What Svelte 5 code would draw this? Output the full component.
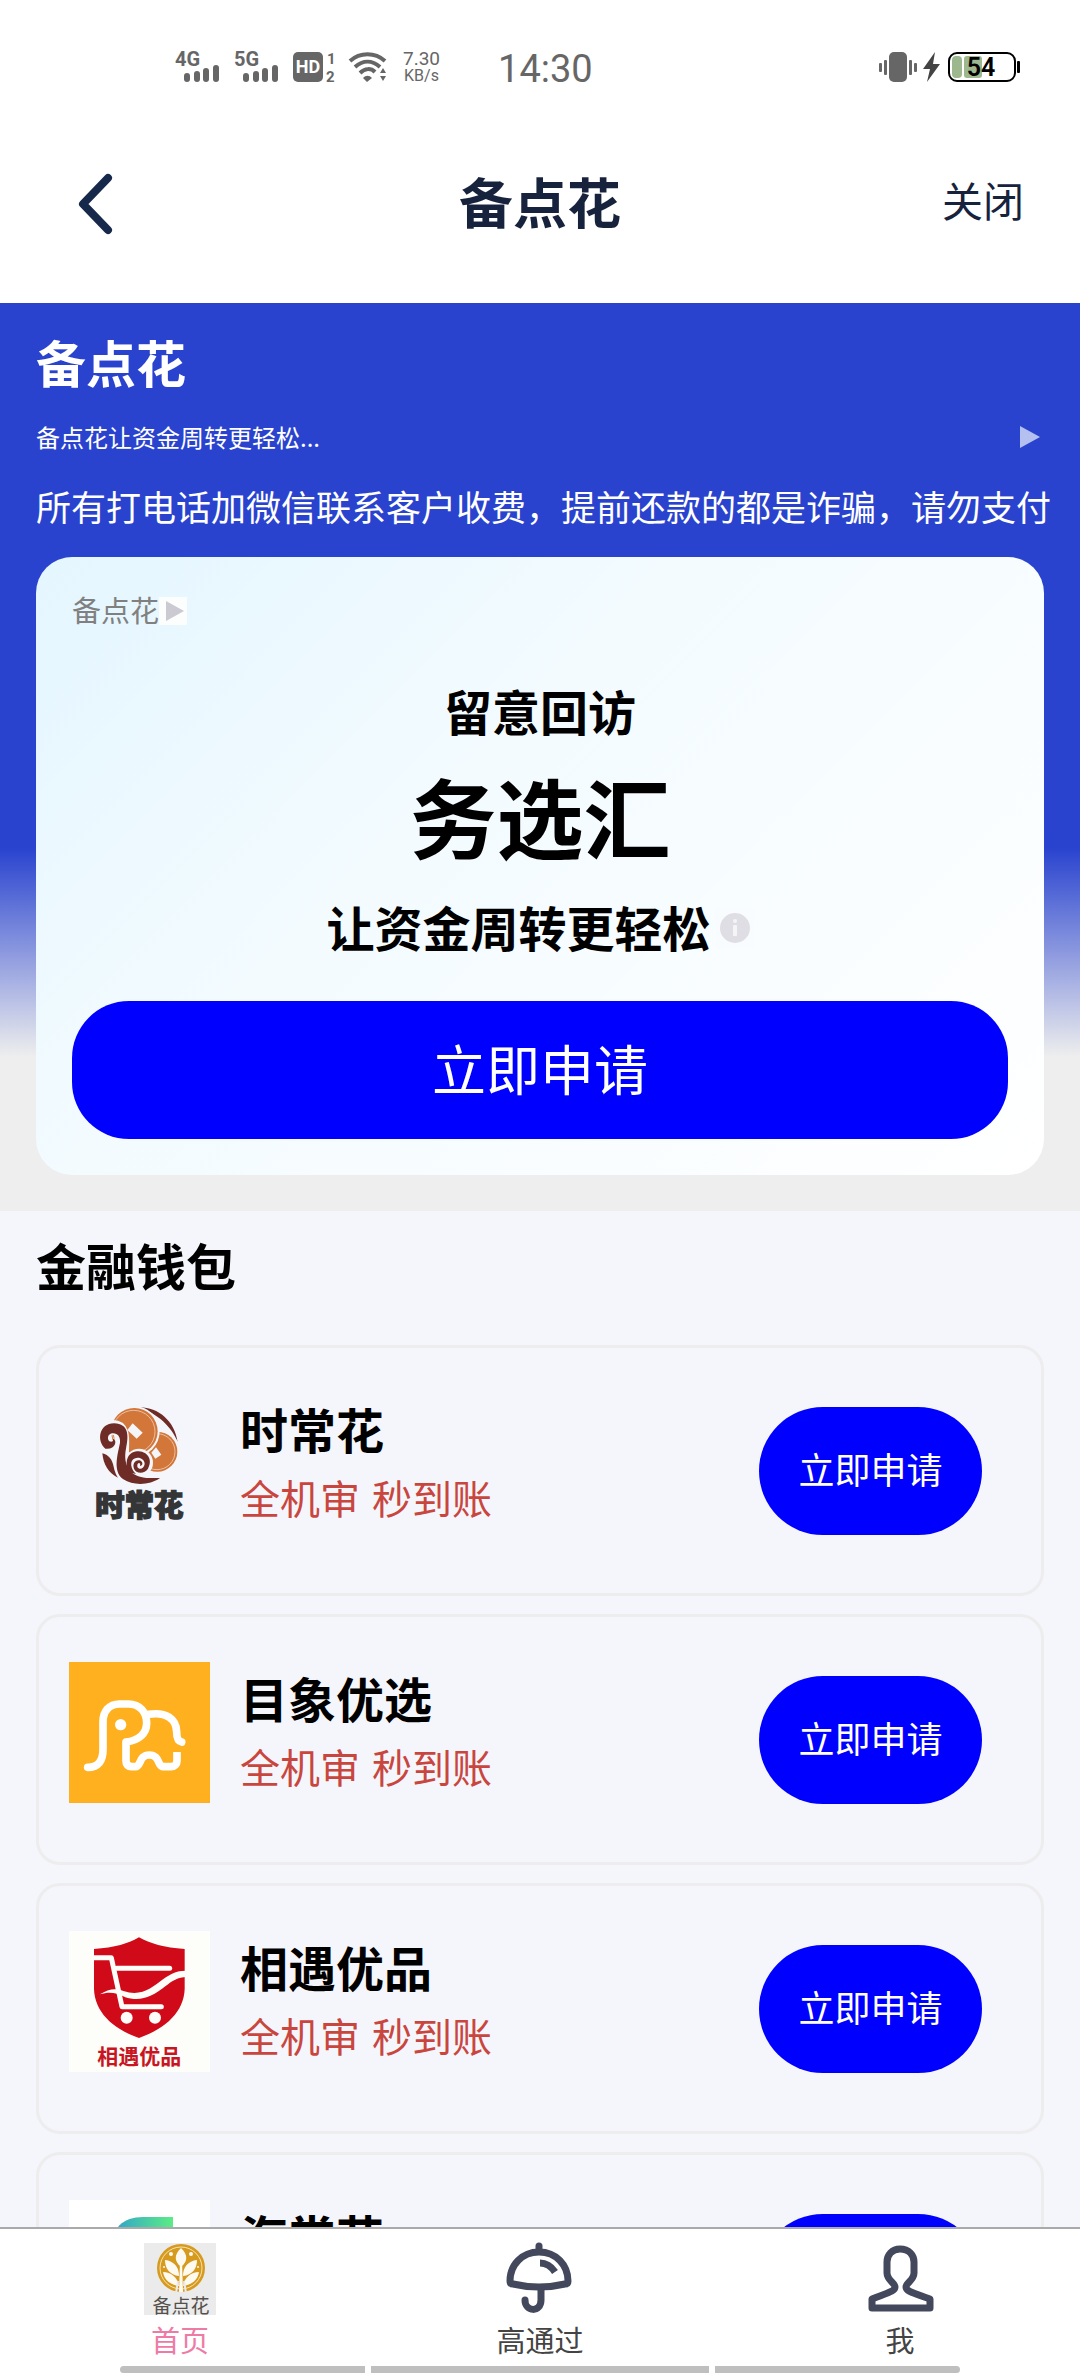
<script>
	/**
	 * @component LoanHome
	 * @description
	 * Home screen of the loan app: status bar, page header, the highlighted
	 * offer, the list of wallets and the bottom tabs.
	 */

	const slogan = '让资金周转更轻松';
	const notice = '所有打电话加微信联系客户收费，提前还款的都是诈骗，请勿支付';

	const wallets = [
		{ id: 'shichang', name: '时常花', tags: ['全机审', '秒到账'] },
		{ id: 'muxiang', name: '目象优选', tags: ['全机审', '秒到账'] },
		{ id: 'xiangyu', name: '相遇优品', tags: ['全机审', '秒到账'] },
		{ id: 'haichang', name: '海常花', tags: ['全机审', '秒到账'] }
	];

	const tabs = [
		{ id: 'home', label: '首页' },
		{ id: 'pass', label: '高通过' },
		{ id: 'me', label: '我' }
	];

	let activeTab = $state('home');
</script>

{#snippet signal(label)}
	<svg width="47" height="32" viewBox="0 0 47 32" role="img" aria-label={label}>
		<text x="0" y="15" font-size="20" font-weight="700">{label}</text>
		<rect x="9" y="22" width="6" height="9" rx="3" />
		<rect x="19" y="20" width="6" height="11" rx="3" />
		<rect x="28" y="17" width="6" height="14" rx="3" />
		<rect x="38" y="14" width="6" height="17" rx="3" />
	</svg>
{/snippet}

{#snippet walletLogo(id)}
	{#if id === 'shichang'}
		<svg class="logo" viewBox="87 159 423 423" aria-hidden="true">
			<path d="M292 202C350 198 404 240 413 306C396 262 352 218 292 202Z" fill="#6f2b25" />
			<circle cx="355" cy="335" r="65" fill="#f5f6fa" />
			<circle cx="352" cy="335" r="60" fill="#d2763a" />
			<circle cx="351" cy="335" r="54" fill="none" stroke="#f5e4d8" stroke-width="2" />
			<circle cx="283" cy="274" r="76" fill="#f5f6fa" />
			<circle cx="283" cy="274" r="70" fill="#d2763a" />
			<circle cx="281" cy="275" r="64" fill="none" stroke="#f5e4d8" stroke-width="2" />
			<path d="M278 250L308 278L290 296L262 270Z" fill="#f5f6fa" />
			<path d="M348 322L364 344L346 356L334 338Z" fill="#f5f6fa" />
			<path d="M205 322C182 300 190 262 218 262C260 262 240 320 246 360C252 402 292 420 350 418" fill="none" stroke="#f5f6fa" stroke-width="44" stroke-linecap="round" />
			<circle cx="297" cy="368" r="42" fill="#f5f6fa" />
			<path d="M187 340C207 345 217 360 221 380C224 396 229 405 234 413C206 400 190 374 187 340Z" fill="#6f2b25" />
			<path d="M196 326C168 302 178 250 222 250C268 251 266 290 258 326C250 364 262 400 300 410C322 416 342 414 360 414C330 436 280 438 250 418C216 394 234 340 240 308C242 290 232 278 216 280C204 282 200 296 208 304C216 308 222 302 218 296C234 300 226 330 196 326Z" fill="#6f2b25" />
			<path d="M264 396C252 356 268 334 296 334C326 336 338 362 324 386C314 402 288 402 282 386C276 370 288 356 302 362C310 368 308 376 300 378C304 366 290 366 292 380C296 390 312 388 314 372C314 354 288 346 276 362C270 374 276 390 288 402Z" fill="#6f2b25" />
			<text x="298" y="528" text-anchor="middle" font-size="88" font-weight="900" fill="#333537" stroke="#333537" stroke-width="4">时常花</text>
		</svg>
	{:else if id === 'muxiang'}
		<svg class="logo" viewBox="87 155 423 423" aria-hidden="true">
			<rect x="87" y="155" width="423" height="423" fill="#ffb01e" />
			<g fill="none" stroke="#fff" stroke-width="23" stroke-linecap="round" stroke-linejoin="round">
				<path d="M143 471C176 471 189 450 189 418V334C189 302 208 281 238 281H265C300 281 320 306 320 338C320 370 296 391 258 395V452C258 463 264 469 275 469H286C304 469 296 434 328 434C360 434 352 469 370 469H393C404 469 411 462 411 451V428" />
				<path d="M326 312C378 304 410 326 410 365C410 382 414 393 425 395" />
			</g>
			<path d="M396 408L410 414L426 410V425H396Z" fill="#ffb01e" />
			<circle cx="242" cy="343" r="17" fill="#fff" />
		</svg>
	{:else if id === 'xiangyu'}
		<svg class="logo" viewBox="87 152 423 423" aria-hidden="true">
			<rect x="87" y="152" width="423" height="423" fill="#fdfdfa" />
			<path d="M297 171C330 190 372 202 434 206V326C432 392 380 444 297 473C214 444 164 392 162 326V206C224 202 266 190 297 171Z" fill="#d00a18" />
			<g fill="none" stroke="#fdfdfa" stroke-linecap="round" stroke-linejoin="round">
				<path d="M156 232H214L246 379H364" stroke-width="15" />
				<path d="M230 264H389" stroke-width="15" />
			</g>
			<path d="M180 342C204 326 228 322 250 332C304 350 336 322 370 296C392 280 412 270 440 271V290C414 290 396 302 376 318C336 350 300 366 254 350C228 336 206 334 180 342Z" fill="#fdfdfa" />
			<circle cx="260" cy="412" r="18" fill="#fdfdfa" />
			<circle cx="345" cy="412" r="18" fill="#fdfdfa" />
			<text x="298" y="551" text-anchor="middle" font-size="63" font-weight="700" fill="#c91521">相遇优品</text>
		</svg>
	{:else}
		<svg class="logo" viewBox="0 0 141 141" aria-hidden="true">
			<defs>
				<linearGradient id="leaf" x1="0" x2="1" y1="0" y2="0">
					<stop offset="0" stop-color="#2f9fd0" />
					<stop offset="1" stop-color="#5cec85" />
				</linearGradient>
			</defs>
			<rect width="141" height="141" fill="#fff" />
			<path d="M42 50C42 28 54 17 74 17H104V36C104 52 92 60 76 60H42Z" fill="url(#leaf)" />
		</svg>
	{/if}
{/snippet}

{#snippet tabIcon(id)}
	{#if id === 'home'}
		<svg class="tab_icon" viewBox="0 0 72 72" aria-hidden="true">
			<rect width="72" height="72" fill="#ebebeb" />
			<circle cx="37" cy="25" r="24" fill="#d69a1f" />
			<circle cx="37" cy="25" r="21" fill="none" stroke="#f7e3b0" stroke-width="1" />
			<g fill="#fffaf0">
				<path d="M37 5C44 12 44 18 37 24C30 18 30 12 37 5Z" />
				<path d="M21 17C30 18 35 24 35 33C26 32 21 26 21 17Z" />
				<path d="M53 17C44 18 39 24 39 33C48 32 53 26 53 17Z" />
				<path d="M19 29C27 29 34 35 35 43C27 42 20 37 19 29Z" />
				<path d="M55 29C47 29 40 35 39 43C47 42 54 37 55 29Z" />
				<path d="M36 18H38L39 49H35Z" />
				<circle cx="27" cy="11" r="2" />
				<circle cx="47" cy="11" r="2" />
				<circle cx="20" cy="24" r="1" />
				<circle cx="54" cy="24" r="1" />
			</g>
			<path d="M32 50L34 38M42 50L40 38" stroke="#ebebeb" stroke-width="2" />
			<text x="37" y="70" text-anchor="middle" font-size="19" fill="#55504c">备点花</text>
		</svg>
	{:else if id === 'pass'}
		<svg class="tab_icon line" viewBox="0 0 72 72" aria-hidden="true">
			<path d="M35 3V8" />
			<path d="M35 9C18 9 6 22 6 38C6 40 7 41 9 41C26 45 44 45 61 41C63 41 64 40 64 38C64 22 52 9 35 9Z" />
			<path class="thick" d="M36 20C42 20 47 23 51 29" />
			<path d="M37 45V57C37 70 21 69 21 57" />
		</svg>
	{:else}
		<svg class="tab_icon line" viewBox="0 0 72 72" aria-hidden="true">
			<path d="M36 6C28 6 23 12 23 19V30C23 37 31 40 31 44C31 48 26 49 8 56V65H66V56C46 49 42 48 42 44C42 40 50 37 50 30V19C50 12 45 6 36 6Z" />
		</svg>
	{/if}
{/snippet}

<div class="app">
	<div class="status_bar">
		<div class="status_left">
			{@render signal('4G')}
			{@render signal('5G')}
			<svg width="44" height="32" viewBox="0 0 44 32" role="img" aria-label="HD 1 2">
				<rect x="0" y="1" width="30" height="30" rx="5" />
				<text x="15" y="22" text-anchor="middle" font-size="18" font-weight="700" class="hd">HD</text>
				<text x="34" y="13" font-size="15" font-weight="700">1</text>
				<text x="33" y="31" font-size="15" font-weight="700">2</text>
			</svg>
			<svg width="38" height="32" viewBox="0 0 38 32" role="img" aria-label="Wi-Fi">
				<g fill="none" stroke="#666" stroke-width="4">
					<path d="M1 10C11 1 26 1 36 10" />
					<path d="M6 16C14 9 23 9 31 16" />
					<path d="M11 22C16 17 22 17 26 21" />
				</g>
				<path d="M14 27C17 24 20 24 23 27L18 31Z" />
				<path d="M31 22L34 17L37 22ZM31 25H37L34 30Z" />
			</svg>
			<div class="speed">
				<span>7.30</span>
				<span class="unit">KB/s</span>
			</div>
			<time class="clock">14:30</time>
		</div>
		<div class="status_right">
			<svg width="38" height="32" viewBox="0 0 38 32" aria-hidden="true">
				<rect x="10" y="1" width="18" height="30" rx="5" />
				<rect x="5" y="9" width="3" height="15" rx="1" />
				<rect x="0" y="12" width="3" height="9" rx="1" />
				<rect x="30" y="9" width="3" height="15" rx="1" />
				<rect x="35" y="12" width="3" height="9" rx="1" />
			</svg>
			<svg width="18" height="32" viewBox="0 0 18 32" aria-hidden="true">
				<path d="M12 1L0 18H7L4 31L17 13H10Z" fill="#444" />
			</svg>
			<svg width="74" height="32" viewBox="0 0 74 32" role="img" aria-label="54%">
				<rect x="2" y="2" width="66" height="28" rx="8" fill="#fff" stroke="#000" stroke-width="2" />
				<rect x="5" y="5" width="10" height="22" rx="4" fill="#9db88f" />
				<rect x="17" y="5" width="18" height="22" rx="3" fill="#9db88f" />
				<rect x="70" y="10" width="3" height="12" rx="1" fill="#000" />
				<text x="34" y="25" text-anchor="middle" font-size="25" font-weight="600" class="battery">54</text>
			</svg>
		</div>
	</div>

	<header>
		<button class="back" aria-label="返回">
			<svg width="36" height="64" viewBox="0 0 36 64" aria-hidden="true">
				<path d="M31 6L6 32L31 58" fill="none" stroke="#17294a" stroke-width="8" stroke-linecap="round" stroke-linejoin="round" />
			</svg>
		</button>
		<h1>备点花</h1>
		<button class="close">关闭</button>
	</header>

	<main>
		<section class="hero">
			<h2>备点花</h2>
			<div class="hero_row">
				<p>备点花{slogan}...</p>
				<svg width="24" height="24" viewBox="0 0 24 24" aria-hidden="true">
					<path d="M0 1L20 12L0 23Z" fill="#b4c0f0" />
				</svg>
			</div>
			<p class="notice">{notice}</p>

			<div class="offer">
				<p class="offer_label">
					备点花
					<svg width="28" height="28" viewBox="0 0 28 28" aria-hidden="true">
						<rect width="28" height="28" fill="#fcfdfd" />
						<path d="M7 4L25 14L7 24Z" fill="#cbc9d2" />
					</svg>
				</p>
				<h3>留意回访</h3>
				<p class="offer_name">务选汇</p>
				<h3 class="slogan">
					{slogan}
					<svg width="38" height="38" viewBox="0 0 38 38" aria-hidden="true">
						<rect width="38" height="38" fill="#f9fcfe" />
						<circle cx="19" cy="19" r="15" fill="#dfdee5" />
						<circle cx="19" cy="12" r="2" fill="#f5f5f8" />
						<rect x="17" y="16" width="4" height="11" rx="1" fill="#f5f5f8" />
					</svg>
				</h3>
				<button class="apply_main">立即申请</button>
			</div>
		</section>

		<section class="wallets">
			<h2>金融钱包</h2>
			<ul>
				{#each wallets as wallet (wallet.id)}
					<li>
						<div class="info">
							{@render walletLogo(wallet.id)}
							<div class="text">
								<h3>{wallet.name}</h3>
								<p>
									{#each wallet.tags as tag}
										<span>{tag}</span>
									{/each}
								</p>
							</div>
						</div>
						<button class="apply">立即申请</button>
					</li>
				{/each}
			</ul>
		</section>
	</main>

	<nav>
		{#each tabs as tab (tab.id)}
			<a href={`#${tab.id}`} class:active={activeTab === tab.id} onclick={() => (activeTab = tab.id)}>
				{@render tabIcon(tab.id)}
				<span>{tab.label}</span>
			</a>
		{/each}
		<div class="gesture" aria-hidden="true"><i></i><i class="middle"></i><i></i></div>
	</nav>
</div>

<style>
	:global(body) {
		margin: 0;
		background-color: #f5f6fb;
	}

	.app {
		display: flex;
		flex-direction: column;
		height: 100vh;
		overflow: hidden;
		font-family: 'Noto Sans CJK SC', 'Noto Sans', sans-serif;
		color: #000;
	}

	h1,
	h2,
	h3,
	p,
	ul {
		margin: 0;
		padding: 0;
		list-style: none;
	}

	svg {
		display: block;
		flex: none;
		overflow: visible;
	}

	button {
		padding: 0;
		border: none;
		background: none;
		font-family: inherit;
		cursor: pointer;
	}

	/* status bar */
	.status_bar {
		display: flex;
		flex: none;
		justify-content: space-between;
		align-items: center;
		height: 134px;
		padding: 0 59px 0 175px;
		background-color: #fff;
		color: #666;
		fill: #666;
		font-family: Roboto, sans-serif;
	}

	.status_left {
		display: flex;
		align-items: center;
		gap: 12px;
	}

	.status_right {
		display: flex;
		align-items: center;
		gap: 6px;
	}

	.hd {
		fill: #fff;
	}

	.battery {
		fill: #000;
	}

	.speed {
		display: flex;
		flex-direction: column;
		align-items: center;
		margin-left: 4px;
		font-size: 19px;
		line-height: 17px;
	}

	.unit {
		font-size: 16px;
	}

	.clock {
		margin-left: 46px;
		padding-top: 4px;
		font-size: 38px;
		line-height: 48px;
	}

	/* page header */
	header {
		display: grid;
		grid-template-columns: 1fr auto 1fr;
		flex: none;
		align-items: center;
		height: 134px;
		padding: 0 56px 35px 77px;
		background-color: #fff;
		color: #17233d;
	}

	.back {
		justify-self: start;
		padding-top: 5px;
	}

	h1 {
		margin-right: 21px;
		font-size: 54px;
		line-height: 72px;
	}

	.close {
		justify-self: end;
		padding-bottom: 5px;
		color: inherit;
		font-size: 41px;
		line-height: 60px;
	}

	main {
		flex: 1;
		min-height: 0;
		overflow-y: auto;
		scrollbar-width: none;
	}

	/* hero */
	.hero {
		padding: 22px 36px 36px;
		background: linear-gradient(to bottom, #2943cf 0, #2943cf 60%, #eee 83%);
		color: #fff;
	}

	h2 {
		font-size: 50px;
		line-height: 72px;
	}

	.hero_row {
		display: flex;
		justify-content: space-between;
		align-items: center;
		margin-top: 22px;
		font-size: 24px;
		line-height: 36px;
	}

	.notice {
		margin: 26px 0;
		font-size: 35px;
		line-height: 50px;
		white-space: nowrap;
	}

	.offer {
		display: flex;
		flex-direction: column;
		align-items: center;
		padding: 32px 36px 36px;
		border-radius: 36px;
		background: linear-gradient(135deg, #e4f6ff 0%, #f3fbff 40%, #fff 100%);
		color: #000;
	}

	.offer svg {
		margin-top: 4px;
	}

	.offer_label {
		display: flex;
		align-items: center;
		align-self: flex-start;
		color: #808080;
		font-size: 29px;
		line-height: 40px;
	}

	h3 {
		font-size: 48px;
		line-height: 70px;
	}

	.offer h3 {
		margin-top: 46px;
	}

	.offer_name {
		margin-top: 8px;
		font-size: 87px;
		font-weight: 700;
		line-height: 124px;
	}

	.offer .slogan {
		display: flex;
		align-items: center;
		gap: 5px;
		margin-top: 14px;
	}

	.apply_main {
		width: 100%;
		height: 138px;
		margin-top: 40px;
		padding-bottom: 5px;
		border-radius: 57px;
		background-color: #00f;
		color: #fff;
		font-size: 54px;
	}

	/* wallets */
	.wallets {
		padding: 17px 36px 36px;
		background-color: #f5f6fb;
	}

	.wallets ul {
		display: flex;
		flex-direction: column;
		gap: 18px;
		margin-top: 45px;
	}

	.wallets li {
		display: flex;
		justify-content: space-between;
		align-items: center;
		padding: 0 59px 0 30px;
		border: 3px solid #ededee;
		border-radius: 24px;
	}

	.info {
		display: flex;
		gap: 30px;
		padding: 45px 0 59px;
	}

	.logo {
		width: 141px;
		height: 141px;
	}

	.text p {
		display: flex;
		gap: 12px;
		margin-top: 4px;
		color: #c9463f;
		font-size: 40px;
		line-height: 60px;
	}

	.apply {
		width: 223px;
		height: 128px;
		padding-bottom: 5px;
		border-radius: 64px;
		background-color: #00f;
		color: #fff;
		font-size: 36px;
	}

	/* bottom tabs */
	nav {
		display: grid;
		grid-template-columns: repeat(3, 1fr);
		position: relative;
		flex: none;
		padding: 14px 0 17px;
		border-top: 2px solid #aaa;
		background-color: #fff;
	}

	nav a {
		display: flex;
		flex-direction: column;
		align-items: center;
		gap: 4px;
		color: #444;
		font-size: 29px;
		line-height: 40px;
		text-decoration: none;
	}

	nav a.active {
		color: #ee7ba6;
	}

	.tab_icon {
		width: 72px;
		height: 72px;
	}

	.line {
		fill: none;
		stroke: #43485c;
		stroke-width: 7;
		stroke-linecap: round;
		stroke-linejoin: round;
	}

	.thick {
		stroke-linecap: butt;
	}

	.gesture {
		display: flex;
		gap: 6px;
		position: absolute;
		right: 120px;
		bottom: 3px;
		left: 120px;
		height: 7px;
	}

	.gesture i {
		flex: 245;
		background-color: #bfbfbf;
	}

	.gesture i.middle {
		flex: 338;
	}

	.gesture i:first-child {
		border-radius: 4px 0 0 4px;
	}

	.gesture i:last-child {
		border-radius: 0 4px 4px 0;
	}
</style>
